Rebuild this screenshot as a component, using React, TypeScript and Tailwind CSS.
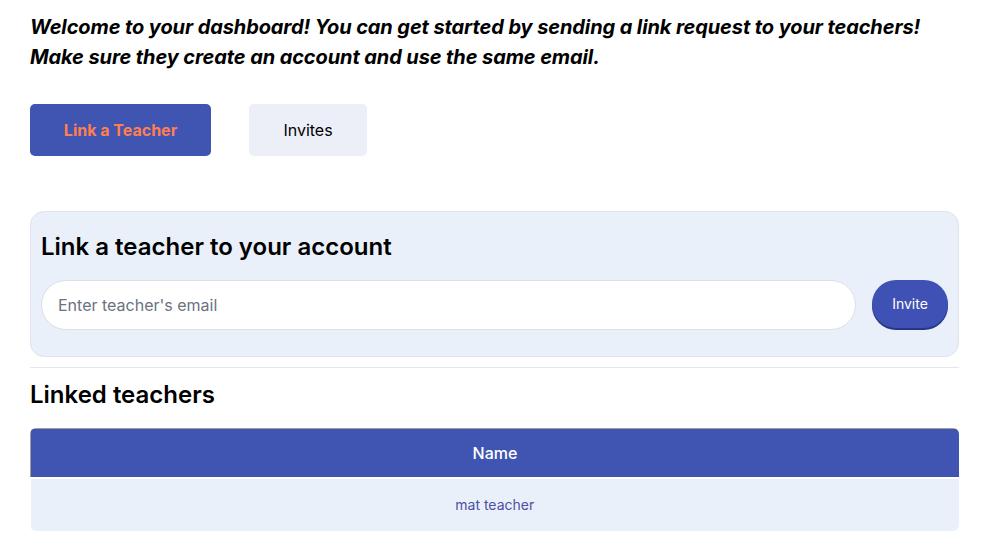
const teachers = [{ id: 1, name: "mat teacher" }];

export default function App() {
  return (
    <div className="min-h-screen bg-white px-[30px] pt-[12px] font-['Inter',sans-serif] text-black">
      <p className="w-[929px] text-[20px] leading-[30px] font-bold italic tracking-[-0.1px]">
        Welcome to your dashboard! You can get started by sending a link request to your teachers!
        <br />
        Make sure they create an account and use the same email.
      </p>

      <div className="mt-[32px] flex gap-[38px]">
        <button className="h-[52px] w-[181px] rounded-[5px] bg-[#4054b2] text-[16px] font-bold text-[#ff7f50]">
          Link a Teacher
        </button>
        <button className="h-[52px] w-[118px] rounded-[5px] bg-[#eceff8] text-[16px] text-black">
          Invites
        </button>
      </div>

      <div className="mt-[55px] w-[929px] rounded-[14px] border border-[#dfe4ea] bg-[#e9f0f9] px-[10px] pt-[19px] pb-[26px]">
        <h2 className="text-[24px] leading-[32px] font-semibold">Link a teacher to your account</h2>
        <div className="mt-[17px] flex items-start gap-[16px]">
          <input
            type="email"
            placeholder="Enter teacher's email"
            className="h-[50px] flex-1 rounded-full border border-[#dcdfe4] bg-white px-[16px] text-[16px] text-black outline-none placeholder:text-[#6b7280]"
          />
          <button className="h-[48px] w-[76px] rounded-full bg-[#3f51b5] pb-[2px] text-[14px] text-white shadow-[0_2px_0_#27358a]">
            Invite
          </button>
        </div>
      </div>

      <hr className="mt-[10px] w-[929px] border-t border-[#e5e7eb]" />

      <h2 className="mt-[11px] text-[24px] leading-[32px] font-semibold">Linked teachers</h2>

      <div className="mt-[17px] w-[929px] overflow-hidden rounded-[6px]">
        <table className="w-full border-collapse">
          <thead>
            <tr className="h-[49px] border-t border-l border-[#9e9e9e] bg-[#3f55b1]">
              <th className="text-[16px] font-medium text-white">Name</th>
            </tr>
          </thead>
          <tbody>
            {teachers.map((t) => (
              <tr key={t.id} className="h-[53px] border-t-2 border-white bg-[#eaf0fa]">
                <td className="text-center text-[14px] text-[#4c4fa5]">{t.name}</td>
              </tr>
            ))}
          </tbody>
        </table>
      </div>
    </div>
  );
}
